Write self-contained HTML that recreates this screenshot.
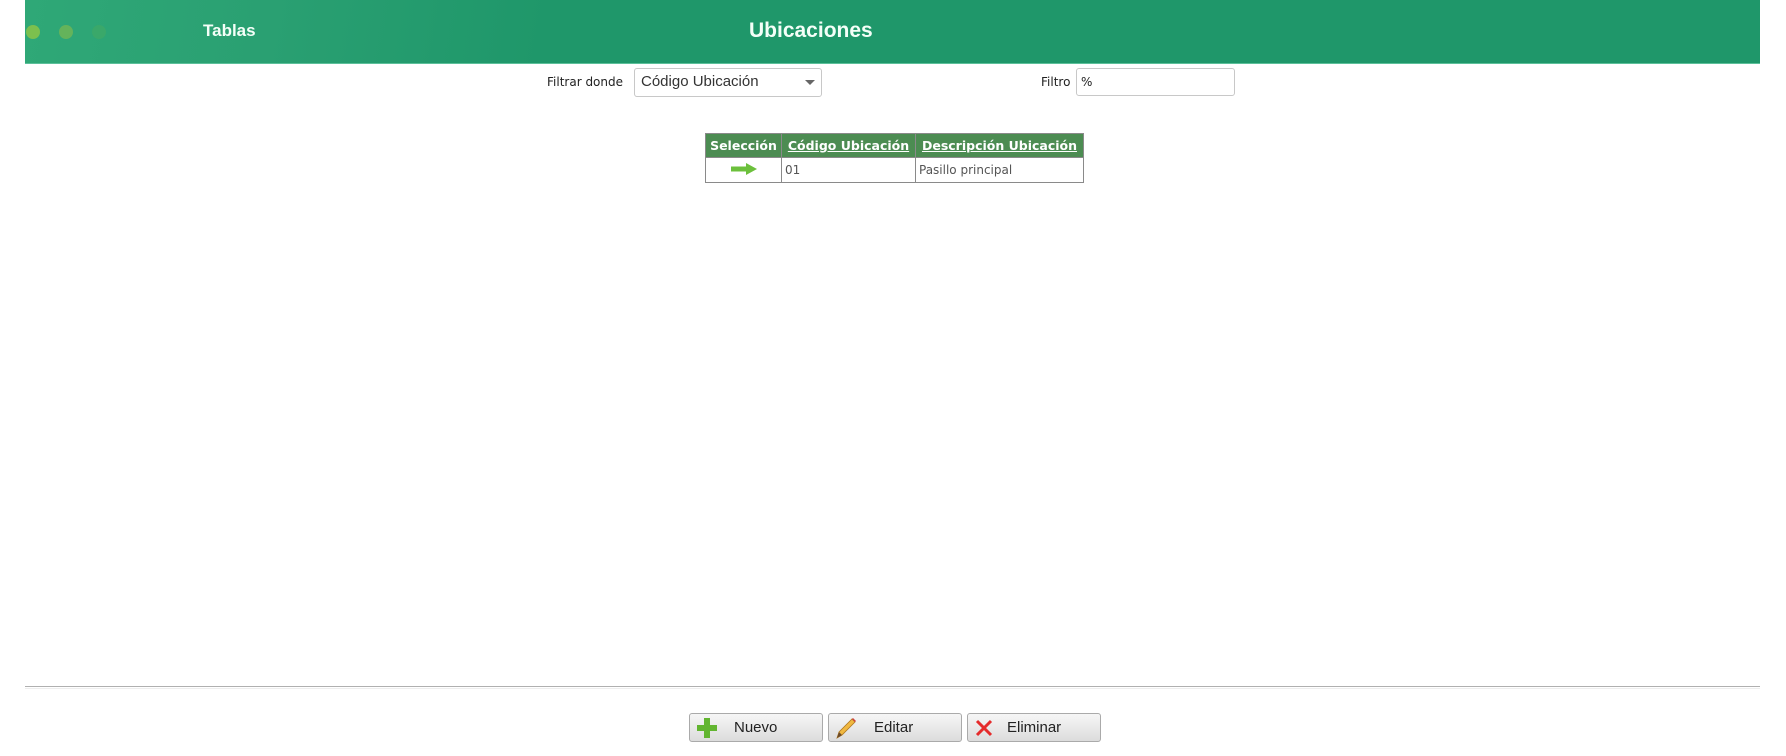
<!DOCTYPE html>
<html><head><meta charset="utf-8"><style>
body{margin:0;width:1786px;height:756px;background:#fff;position:relative;font-family:"DejaVu Sans","Liberation Sans",sans-serif;overflow:hidden}
.a{position:absolute}
.hdr{left:25px;top:0;width:1735px;height:63px;background:linear-gradient(100deg,#2fa877 0%,#2aa072 14%,#1f976a 30%,#1f976a 100%);border-bottom:1px solid #5cc09a}
.dot{width:14px;height:14px;border-radius:50%;top:25px}
.ht{color:#f4fff8;font-weight:bold;font-family:"Liberation Sans",sans-serif}
.lbl{font-size:12px;color:#222}
.box{border:1px solid #c8c8c8;border-radius:3px;background:#fff;box-sizing:border-box}
table{border-collapse:collapse;font-size:12.5px}
th{background:#4c8c52;color:#fff;font-weight:bold;padding:0 2px;height:23px;border:1px solid #8a8a8a;white-space:nowrap}
th u{color:#fff}
td{border:1px solid #8a8a8a;height:24px;padding:0 3px;color:#555;font-size:12px}
.btn{top:713px;height:29px;border:1px solid #aaa;border-radius:3px;background:linear-gradient(#f6f6f6,#dcdcdc);box-sizing:border-box;font-family:"Liberation Sans",sans-serif;font-size:15px;color:#222}
</style></head><body>
<div class="a hdr"></div>
<div class="a dot" style="left:26px;background:#7cc04e"></div>
<div class="a dot" style="left:59px;background:#6ab559;opacity:.9"></div>
<div class="a dot" style="left:92px;background:#3aa86a"></div>
<div class="a ht" style="left:203px;top:21px;font-size:17px">Tablas</div>
<div class="a ht" style="left:749px;top:19px;font-size:21px">Ubicaciones</div>

<div class="a lbl" style="left:547px;top:75px">Filtrar donde</div>
<div class="a box" style="left:634px;top:68px;width:188px;height:29px"></div>
<div class="a" style="left:641px;top:73px;font-size:15px;color:#333;font-family:'Liberation Sans',sans-serif">Código Ubicación</div>
<div class="a" style="left:805px;top:80px;width:0;height:0;border-left:5px solid transparent;border-right:5px solid transparent;border-top:5px solid #666"></div>

<div class="a lbl" style="left:1041px;top:75px">Filtro</div>
<div class="a box" style="left:1076px;top:68px;width:159px;height:28px"></div>
<div class="a" style="left:1081px;top:75px;font-size:12px;color:#222">%</div>

<table class="a" style="left:705px;top:133px;width:379px">
<tr><th style="width:71px">Selección</th><th style="width:129px"><u>Código Ubicación</u></th><th><u>Descripción Ubicación</u></th></tr>
<tr><td style="text-align:center"><svg width="26" height="12" viewBox="0 0 26 12"><path d="M0 3.5h15V0l11 6-11 6V8.5H0z" fill="#6cc03c"/></svg></td><td>01</td><td>Pasillo principal</td></tr>
</table>

<div class="a" style="left:25px;top:686px;width:1735px;height:1px;background:#b0b0b0"></div>
<div class="a" style="left:25px;top:688px;width:1735px;height:1px;background:#eee"></div>

<div class="a btn" style="left:689px;width:134px">
<svg class="a" style="left:6px;top:3px" width="22" height="22" viewBox="0 0 22 22"><path d="M8 1h6v7h7v6h-7v7H8v-7H1V8h7z" fill="#62b530"/></svg>
<span class="a" style="left:44px;top:5px">Nuevo</span></div>
<div class="a btn" style="left:828px;width:134px">
<svg class="a" style="left:5px;top:2px" width="24" height="24" viewBox="0 0 24 24"><path d="M3 22l2-6L18 3l3 3L8 19z" fill="#f0b840" stroke="#b07820" stroke-width=".8"/><path d="M3 22l2-6 3 3z" fill="#6b4a2a"/><path d="M18 3l3 3 1-1-3-3z" fill="#d04040"/></svg>
<span class="a" style="left:45px;top:5px">Editar</span></div>
<div class="a btn" style="left:967px;width:134px">
<svg class="a" style="left:7px;top:5px" width="18" height="18" viewBox="0 0 18 18"><path d="M2 2l14 14M16 2L2 16" stroke="#e52b2b" stroke-width="3"/></svg>
<span class="a" style="left:39px;top:5px">Eliminar</span></div>
</body></html>
